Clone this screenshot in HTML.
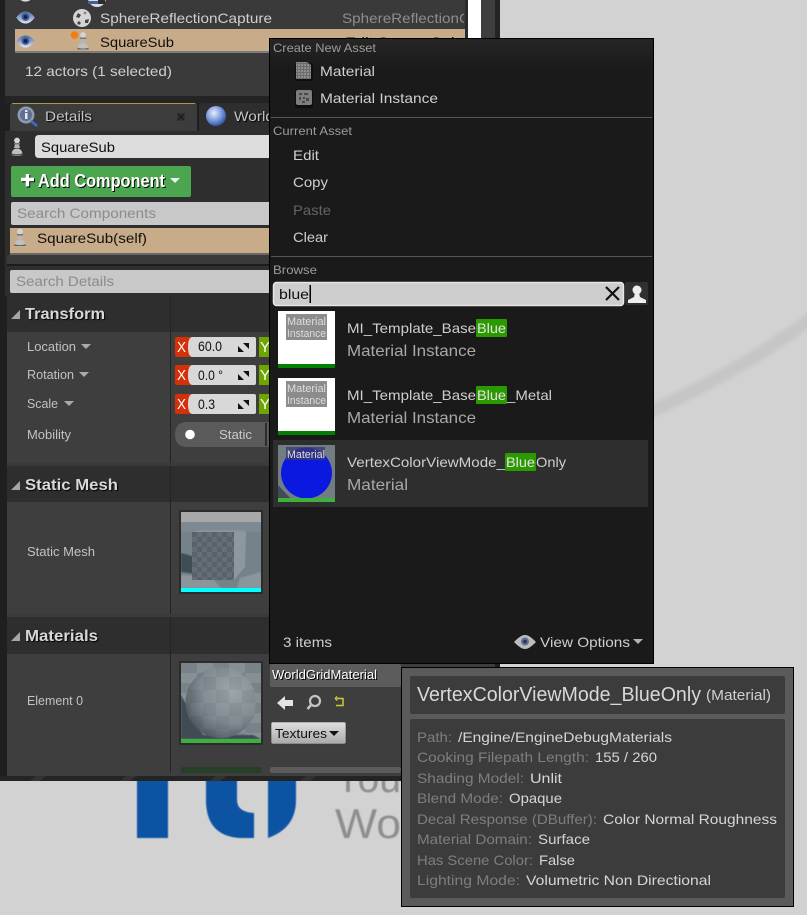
<!DOCTYPE html>
<html><head><meta charset="utf-8"><style>
html,body{margin:0;padding:0;background:#d2d2d2;width:807px;height:915px;overflow:hidden}
svg{display:block;position:absolute;left:0;top:0}
text{font-family:"Liberation Sans",sans-serif;font-size:14px;fill:#cfcfcf;white-space:pre}
.s{text-shadow:1px 1px 1px #000}
.k{fill:#101010}
.h{font-size:12px;fill:#9c9c9c}
.sub{font-size:16px;fill:#a8a8a8}
.p{font-size:13px;fill:#c2c2c2}
.b{font-weight:bold;font-size:16px;fill:#d8d8d8;text-shadow:1px 1px 1px #000}
.l{fill:#7e7e7e}
.v{fill:#d6d6d6}
</style></head><body>
<svg width="807" height="915" viewBox="0 0 807 915" xmlns="http://www.w3.org/2000/svg">
<defs>
<filter id="bl1" x="-10%" y="-10%" width="120%" height="120%"><feGaussianBlur stdDeviation=".6"/></filter>
<filter id="bl2" x="-10%" y="-30%" width="120%" height="160%"><feGaussianBlur stdDeviation="2"/></filter>
<linearGradient id="btn" x1="0" y1="0" x2="0" y2="1"><stop offset="0" stop-color="#e0e0e0"/><stop offset="1" stop-color="#a8a8a8"/></linearGradient>
<linearGradient id="top" x1="0" y1="0" x2="0" y2="1"><stop offset="0" stop-color="#262626"/><stop offset="1" stop-color="#1a1a1a"/></linearGradient>
<linearGradient id="eyeg" x1="0" y1="0" x2="0" y2="1"><stop offset="0" stop-color="#4f6ba6"/><stop offset=".5" stop-color="#8fa4cf"/><stop offset="1" stop-color="#e4e8f0"/></linearGradient>
<radialGradient id="sph" cx=".66" cy=".34" r=".82"><stop offset="0" stop-color="#9ca6ab"/><stop offset=".55" stop-color="#808b91"/><stop offset=".85" stop-color="#596268"/><stop offset="1" stop-color="#383f44"/></radialGradient>
<radialGradient id="glob" cx=".4" cy=".35" r=".7"><stop offset="0" stop-color="#e8eefa"/><stop offset=".6" stop-color="#6f90d8"/><stop offset="1" stop-color="#2c4a90"/></radialGradient>
<pattern id="chk2" width="10" height="10" patternUnits="userSpaceOnUse" x="192" y="532"><rect width="10" height="10" fill="#646e75"/><rect width="5" height="5" fill="#59626a"/><rect x="5" y="5" width="5" height="5" fill="#59626a"/></pattern>
<pattern id="chk3" width="32" height="20" patternUnits="userSpaceOnUse" x="181" y="663"><rect width="32" height="20" fill="#868f94"/><rect width="16" height="10" fill="#788288"/><rect x="16" y="10" width="16" height="10" fill="#788288"/></pattern>
<pattern id="chk4" width="26" height="26" patternUnits="userSpaceOnUse" x="190" y="664"><rect width="13" height="13" fill="#000"/><rect x="13" y="13" width="13" height="13" fill="#000"/></pattern>
<pattern id="grid" width="3" height="3" patternUnits="userSpaceOnUse"><rect width="3" height="3" fill="#8e8e8e"/><rect width="1" height="3" fill="#6c6c6c"/><rect width="3" height="1" fill="#6c6c6c"/></pattern>
<clipPath id="cTop"><rect x="0" y="0" width="464" height="28"/></clipPath>
<clipPath id="cWorld"><rect x="198" y="100" width="71" height="32"/></clipPath>
<clipPath id="cS"><rect x="181" y="663" width="80" height="76"/></clipPath>
<clipPath id="cB"><rect x="278" y="445" width="57" height="53"/></clipPath>
<clipPath id="cM"><rect x="181" y="512" width="80" height="76"/></clipPath>
<symbol id="eye" viewBox="0 0 20 14" overflow="visible"><path d="M0 7C4 1.500 7 .5 10 .5S16 1.500 20 7C16 12.500 13 13.500 10 13.500S4 12.500 0 7Z" fill="url(#eyeg)"/><circle cx="10" cy="6.500" r="4.200" fill="#3f5a94"/><circle cx="10" cy="6.500" r="2" fill="#14203f"/></symbol>
<symbol id="pawn" viewBox="0 0 12 18" overflow="visible"><circle cx="6" cy="3" r="2.900" fill="#d4d4d4"/><rect x="3" y="5.500" width="6" height="1.500" fill="#777"/><path d="M4 7h4l1 3.500H3Z" fill="#b6b6b6"/><path d="M.5 17c0-3.500 2-6 5.500-6s5.500 2.500 5.500 6c0 .8-1 1-5.500 1s-5.500-.2-5.500-1Z" fill="#c0c0c0"/><path d="M.5 15.500c2 1.500 9 1.500 11 0v2H.5Z" fill="#5e5e5e"/></symbol>
</defs>

<!-- page background decoration -->
<rect width="807" height="915" fill="#d2d2d2"/>
<path d="M640 416Q735 375 815 316" fill="none" stroke="#c6c6c6" stroke-width="13" filter="url(#bl2)"/>
<g filter="url(#bl1)">
<path d="M137 775h31v63h-31Z" fill="#0a52a4"/>
<path d="M206 775H237V800Q237 812 254 813V838H240Q206 836 206 800Z" fill="#0a52a4"/>
<path d="M268 775H296V800Q296 828 268 838Z" fill="#0a52a4"/>
<text x="335" y="792" textLength="66" lengthAdjust="spacingAndGlyphs" style="font-size:42px;fill:#8e8e8e">You</text>
<text x="335" y="838" textLength="66" lengthAdjust="spacingAndGlyphs" style="font-size:42px;fill:#8e8e8e">Wo</text>
</g>

<!-- editor window -->
<rect x="0" y="0" width="500" height="781" fill="#1f1f1f"/>
<rect x="5" y="0" width="460" height="96" fill="#3a3a3a"/>
<rect x="468" y="0" width="13" height="38" fill="#fff"/>
<rect x="465" y="0" width="3" height="38" fill="#2a2a2a"/>
<rect x="481" y="0" width="14" height="38" fill="#3e3e3e"/>
<rect x="5" y="96" width="490" height="7" fill="#242424"/>
<rect x="5" y="131" width="490" height="165" fill="#2e2e2e"/>

<!-- outliner -->
<use href="#eye" x="16" y="-11" width="19" height="13"/>
<circle cx="97" cy="-2" r="9" fill="#dcdcdc"/><path d="M88 1h10v3H88Z" fill="#3f5f9f"/><path d="M98 0h7v4h-7Z" fill="#2c2c2c"/>
<use href="#eye" x="16" y="11" width="19" height="13"/>
<circle cx="82" cy="18" r="9" fill="#d4d4d4"/><path d="M78 13l3 2-2 3-3-1ZM85 20l4-1-1 4-3 0Z" fill="#444"/><circle cx="79" cy="23" r="1.600" fill="#444"/><circle cx="85" cy="13" r="1.400" fill="#888"/>
<text x="100" y="23" textLength="172" lengthAdjust="spacingAndGlyphs">SphereReflectionCapture</text>
<g clip-path="url(#cTop)"><text x="342" y="23" style="fill:#8d8d8d" textLength="128" lengthAdjust="spacingAndGlyphs">SphereReflectionC</text></g>
<rect x="15" y="29" width="450" height="22" fill="#c8ab88"/>
<rect x="15" y="51" width="450" height="2" fill="#7d7d7d"/>
<use href="#eye" x="16" y="35" width="19" height="13"/>
<use href="#pawn" x="77" y="32" width="12" height="18"/>
<circle cx="74.500" cy="35" r="3.800" fill="#ee7f10"/>
<text class="k" x="100" y="47" textLength="74" lengthAdjust="spacingAndGlyphs">SquareSub</text>
<text class="k" x="345" y="47" textLength="115" lengthAdjust="spacingAndGlyphs">Edit SquareSub</text>
<text x="25" y="76" textLength="147" lengthAdjust="spacingAndGlyphs">12 actors (1 selected)</text>

<!-- tabs -->
<path d="M10 131V106q0-3 3-3H197V131Z" fill="#3c3c3c"/>
<path d="M12 103.500H195" stroke="#a69a52" stroke-width="1"/>
<path d="M199 131V106q0-3 3-3H270V131Z" fill="#2e2e2e"/>
<circle cx="26" cy="115" r="8.500" fill="#8f9bb0"/><circle cx="26" cy="115" r="6" fill="#5d6f95"/><rect x="25" y="113" width="2.500" height="6" fill="#e8e8e8"/><rect x="25" y="110" width="2.500" height="2" fill="#e8e8e8"/><path d="M31 121l6 5" stroke="#3a6fd0" stroke-width="2.500"/>
<text class="s" x="45" y="121" textLength="47" lengthAdjust="spacingAndGlyphs" style="fill:#c4c4c4">Details</text>
<path d="M177 113h8v8h-8Z" fill="#333"/><path d="M178 114l6 6M184 114l-6 6" stroke="#1c1c1c" stroke-width="1.500"/>
<circle cx="216" cy="116" r="10" fill="url(#glob)"/>
<g clip-path="url(#cWorld)"><text class="s" x="234" y="121" textLength="40" lengthAdjust="spacingAndGlyphs" style="fill:#c4c4c4">World</text></g>

<!-- details top -->
<use href="#pawn" x="11" y="137" width="12" height="19"/>
<path d="M35 139q0-4 4-4H270v23H39q-4 0-4-4Z" fill="#dcdcdc"/>
<text class="k" x="41" y="152" textLength="74" lengthAdjust="spacingAndGlyphs">SquareSub</text>
<rect x="11" y="166" width="180" height="31" rx="2" fill="#4ca64f"/>
<path d="M21 179.500h13M27.500 174v12.500" stroke="#000" stroke-width="3.500" transform="translate(1 1)"/>
<path d="M21 179.500h13M27.500 174v12.500" stroke="#fff" stroke-width="3.500"/>
<text x="38" y="187" textLength="127" lengthAdjust="spacingAndGlyphs" style="font-size:18px;font-weight:bold;fill:#fff;text-shadow:1px 1px 0 #000">Add Component</text>
<path d="M170 178h10l-5 5Z" fill="#eee"/>
<path d="M11 204q0-2 2-2H270v23H13q-2 0-2-2Z" fill="#c8c8c8"/>
<text x="17" y="218" textLength="139" lengthAdjust="spacingAndGlyphs" style="fill:#8b8b8b">Search Components</text>
<rect x="10" y="228" width="260" height="25" fill="#c8ab88"/>
<rect x="10" y="253" width="260" height="2" fill="#686868"/>
<rect x="7" y="255" width="263" height="9" fill="#3a3a3a"/>
<rect x="7" y="264" width="263" height="2" fill="#1c1c1c"/>
<use href="#pawn" x="14" y="228" width="12" height="19"/>
<text class="k" x="37" y="243" textLength="110" lengthAdjust="spacingAndGlyphs">SquareSub(self)</text>
<path d="M10 272q0-2 2-2H270v23H12q-2 0-2-2Z" fill="#c8c8c8"/>
<text x="16" y="286" textLength="98" lengthAdjust="spacingAndGlyphs" style="fill:#8b8b8b">Search Details</text>

<!-- property panels -->
<rect x="7" y="296" width="488" height="480" fill="#3e3e3e"/>
<rect x="7" y="296" width="263" height="36" fill="#2e2e2e"/>
<rect x="7" y="466" width="263" height="36" rx="2" fill="#2e2e2e"/>
<rect x="7" y="617" width="263" height="37" rx="2" fill="#2e2e2e"/>
<rect x="7" y="463" width="263" height="3" fill="#3a3a3a"/>
<rect x="7" y="614" width="263" height="3" fill="#3a3a3a"/>
<path d="M170.500 296V463M170.500 466V614M170.500 617V773" stroke="#242424"/>
<path d="M11 319h9v-9Z" fill="#a6a6a6"/>
<text class="b" x="25" y="319" textLength="80" lengthAdjust="spacingAndGlyphs">Transform</text>
<path d="M11 490h9v-9Z" fill="#a6a6a6"/>
<text class="b" x="25" y="490" textLength="93" lengthAdjust="spacingAndGlyphs">Static Mesh</text>
<path d="M11 641h9v-9Z" fill="#a6a6a6"/>
<text class="b" x="25" y="641" textLength="73" lengthAdjust="spacingAndGlyphs">Materials</text>

<text class="p" x="27" y="351" textLength="49" lengthAdjust="spacingAndGlyphs">Location</text>
<path d="M81 344h10l-5 5Z" fill="#aaa"/>
<text class="p" x="27" y="379" textLength="47" lengthAdjust="spacingAndGlyphs">Rotation</text>
<path d="M79 372h10l-5 5Z" fill="#aaa"/>
<text class="p" x="27" y="408" textLength="31" lengthAdjust="spacingAndGlyphs">Scale</text>
<path d="M64 401h10l-5 5Z" fill="#aaa"/>
<text class="p" x="27" y="439" textLength="44" lengthAdjust="spacingAndGlyphs">Mobility</text>
<text class="p" x="27" y="556" textLength="68" lengthAdjust="spacingAndGlyphs">Static Mesh</text>
<text class="p" x="27" y="705" textLength="56" lengthAdjust="spacingAndGlyphs">Element 0</text>

<!-- vector rows -->
<g id="r1">
<path d="M177 337h15v20h-15q-2 0-2-2v-16q0-2 2-2Z" fill="#d4310a"/>
<path d="M192 337h62q2 0 2 2v16q0 2-2 2h-62q-4-1-4-10t4-10Z" fill="#d8d8d8"/>
<rect x="259" y="337" width="11" height="20" fill="#6ea600"/>
<text x="177" y="352" textLength="9" lengthAdjust="spacingAndGlyphs" style="fill:#fff;font-size:15px">X</text>
<text x="260" y="352" style="fill:#fff;font-size:15px">Y</text>
<path d="M243 343h6v6ZM238 346l6 6h-6Z" fill="#111"/>
<path d="M246 343l3 0 0 3-3-3ZM238 349l3 3h-3Z" fill="#111"/>
</g>
<use href="#r1" y="28"/>
<use href="#r1" y="57"/>
<text class="k" x="198" y="351" textLength="24" lengthAdjust="spacingAndGlyphs">60.0</text>
<text class="k" x="198" y="380" textLength="25" lengthAdjust="spacingAndGlyphs">0.0 °</text>
<text class="k" x="198" y="409" textLength="17" lengthAdjust="spacingAndGlyphs">0.3</text>

<path d="M187 422H270V447H187q-12 0-12-12.500T187 422Z" fill="#5a5a5a"/>
<circle cx="190" cy="434.500" r="4.800" fill="#fff"/>
<text class="p" x="219" y="439" textLength="33" lengthAdjust="spacingAndGlyphs" style="fill:#c8c8c8">Static</text>
<rect x="265" y="423" width="2" height="23" fill="#2c2c2c"/>

<!-- static mesh thumb -->
<rect x="179" y="510" width="84" height="84" fill="#2c2c2c"/>
<rect x="181" y="512" width="80" height="80" fill="#75828a"/>
<g clip-path="url(#cM)">
<rect x="181" y="512" width="80" height="10" fill="#a8a8a8"/>
<rect x="181" y="522" width="80" height="10" fill="#7d8890"/>
<path d="M181 553l11 3 12 19-23-3Z" fill="#3f4d57" filter="url(#bl1)"/>
<path d="M181 575l30 2 10 11h-40ZM240 578l21-6v16h-24Z" fill="#8b969c" filter="url(#bl1)"/>
<path d="M234 532l12-1-1 36-11 13Z" fill="#8d989e"/>
<path d="M192 532l8-2h46l-12 2Z" fill="#88939a"/>
<path d="M192 532h42v48h-42Z" fill="url(#chk2)"/>
</g>
<rect x="181" y="588" width="80" height="4" fill="#00ffff"/>

<!-- material thumb -->
<rect x="179" y="661" width="84" height="84" fill="#2c2c2c"/>
<g clip-path="url(#cS)">
<rect x="181" y="663" width="80" height="76" fill="url(#chk3)"/>
<path d="M181 695l22 40h50l8 4H181Z" fill="#3f4c54" filter="url(#bl1)"/>
<circle cx="221" cy="702.500" r="35.500" fill="url(#sph)"/>
<circle cx="221" cy="702.500" r="35.500" fill="url(#chk4)" opacity=".05"/>
</g>
<rect x="181" y="739" width="80" height="4" fill="#3db03d"/>
<rect x="181" y="767" width="80" height="6" fill="#263f26"/>
<rect x="270" y="767" width="131" height="6" rx="2" fill="#5c5c5c"/>
<rect x="270" y="664" width="131" height="23" rx="2" fill="#5c5c5c"/>
<text x="272" y="679" textLength="105" lengthAdjust="spacingAndGlyphs" style="fill:#fff;font-size:13px;text-shadow:1px 1px 0 #000">WorldGridMaterial</text>
<path d="M277 703l8-7v4h8v6h-8v4Z" fill="#e4e4e4"/>
<circle cx="315" cy="701" r="5" fill="none" stroke="#c4c4c4" stroke-width="2.200"/><path d="M311 705l-3.500 4" stroke="#c4c4c4" stroke-width="2.500"/>
<path d="M337 698.500h6v7h-7M337 696.500l-1.500 2 1.500 2" fill="none" stroke="#cccc33" stroke-width="1.500"/>
<rect x="271" y="722" width="75" height="22" rx="2" fill="url(#btn)" stroke="#333" stroke-width=".6"/>
<text class="k" x="275" y="738" textLength="52" lengthAdjust="spacingAndGlyphs" style="font-size:13px">Textures</text>
<path d="M329 731h10l-5 5Z" fill="#111"/>

<!-- bottom window edge -->
<rect x="0" y="776" width="402" height="5" fill="#242424"/>
<path d="M30 781l6-5h10l-6 5ZM120 781l6-5h10l-6 5ZM210 781l6-5h10l-6 5ZM300 781l6-5h10l-6 5Z" fill="#333"/>
<rect x="495" y="0" width="5" height="38" fill="#242424"/>

<!-- asset popup -->
<rect x="269.500" y="38.500" width="384" height="625" fill="#1a1a1a" stroke="#000"/>
<rect x="270" y="39" width="383" height="30" fill="url(#top)"/>
<text class="h" x="273" y="52" textLength="103" lengthAdjust="spacingAndGlyphs">Create New Asset</text>
<rect x="295" y="63" width="18" height="18" fill="#0e0e0e"/>
<path d="M296 62h11l4 3v14h-15Z" fill="url(#grid)"/>
<text x="320" y="76" textLength="55" lengthAdjust="spacingAndGlyphs">Material</text>
<rect x="295" y="90" width="18" height="18" fill="#0e0e0e"/>
<rect x="296" y="90" width="16" height="15" rx="2" fill="#7e7e7e"/>
<path d="M299 93h3v2h-3ZM304 93h4v2h-4ZM299 97h2v3h-2ZM303 97h2v2h-2ZM306 98h3v3h-3ZM302 101h3v2h-3Z" fill="#4a4a4a"/>
<text x="320" y="103" textLength="118" lengthAdjust="spacingAndGlyphs">Material Instance</text>
<rect x="271" y="117" width="381" height="1" fill="#555"/>
<text class="h" x="273" y="135" textLength="79" lengthAdjust="spacingAndGlyphs">Current Asset</text>
<text x="293" y="160" textLength="26" lengthAdjust="spacingAndGlyphs">Edit</text>
<text x="293" y="187" textLength="35" lengthAdjust="spacingAndGlyphs">Copy</text>
<text x="293" y="215" textLength="38" lengthAdjust="spacingAndGlyphs" style="fill:#646464">Paste</text>
<text x="293" y="242" textLength="35" lengthAdjust="spacingAndGlyphs">Clear</text>
<rect x="271" y="256" width="381" height="1" fill="#555"/>
<text class="h" x="273" y="274" textLength="44" lengthAdjust="spacingAndGlyphs">Browse</text>

<rect x="273.500" y="282.500" width="350" height="23" rx="3" fill="#cdcdcd" stroke="#e6e6e6" stroke-width="1.500"/>
<text class="k" x="279" y="299" textLength="30" lengthAdjust="spacingAndGlyphs">blue</text>
<rect x="309.500" y="285" width="1.500" height="18" fill="#000"/>
<path d="M606 287l13 13M619 287l-13 13" stroke="#111" stroke-width="2.200"/>
<rect x="625" y="282" width="23" height="23" rx="2" fill="#303030"/>
<circle cx="637" cy="290" r="4.500" fill="#eee"/>
<path d="M635 293h4l1 4 6 3v3h-18v-3l6-3Z" fill="#eee"/>

<!-- result 1 -->
<rect x="278" y="311" width="57" height="57" fill="#fff"/>
<rect x="278" y="364" width="57" height="4" fill="#007f00"/>
<rect x="286" y="314" width="41" height="26" fill="#8c8c8c"/>
<text x="287" y="325" textLength="39" lengthAdjust="spacingAndGlyphs" style="font-size:11px;fill:#dedede">Material</text>
<text x="287" y="337" textLength="39" lengthAdjust="spacingAndGlyphs" style="font-size:11px;fill:#dedede">Instance</text>
<text x="347" y="333" textLength="129" lengthAdjust="spacingAndGlyphs">MI_Template_Base</text>
<rect x="476" y="319" width="31" height="18" rx="1" fill="#2b9900"/>
<text x="477" y="333" textLength="29" lengthAdjust="spacingAndGlyphs" style="fill:#e4e4e4">Blue</text>
<text class="sub" x="347" y="356" textLength="129" lengthAdjust="spacingAndGlyphs">Material Instance</text>

<!-- result 2 -->
<rect x="278" y="378" width="57" height="57" fill="#fff"/>
<rect x="278" y="431" width="57" height="4" fill="#007f00"/>
<rect x="286" y="381" width="41" height="26" fill="#8c8c8c"/>
<text x="287" y="392" textLength="39" lengthAdjust="spacingAndGlyphs" style="font-size:11px;fill:#dedede">Material</text>
<text x="287" y="404" textLength="39" lengthAdjust="spacingAndGlyphs" style="font-size:11px;fill:#dedede">Instance</text>
<text x="347" y="400" textLength="129" lengthAdjust="spacingAndGlyphs">MI_Template_Base</text>
<rect x="476" y="386" width="31" height="18" rx="1" fill="#2b9900"/>
<text x="477" y="400" textLength="29" lengthAdjust="spacingAndGlyphs" style="fill:#e4e4e4">Blue</text>
<text x="507" y="400" textLength="45" lengthAdjust="spacingAndGlyphs">_Metal</text>
<text class="sub" x="347" y="423" textLength="129" lengthAdjust="spacingAndGlyphs">Material Instance</text>

<!-- result 3 -->
<rect x="273" y="440" width="375" height="67" fill="#2e2e2e"/>
<rect x="278" y="445" width="57" height="57" fill="#6d7a82"/>
<g clip-path="url(#cB)">
<rect x="278" y="445" width="57" height="57" fill="#717c83"/>
<path d="M278 485l12 13h-12Z" fill="#3f4c54"/>
<circle cx="306.500" cy="473" r="25.500" fill="#0a18e0"/>
</g>
<rect x="286" y="447" width="39" height="13" fill="#3a3a6a" opacity=".75"/>
<text x="287" y="458" textLength="38" lengthAdjust="spacingAndGlyphs" style="font-size:11px;fill:#dedede">Material</text>
<rect x="278" y="498" width="57" height="4" fill="#3db03d"/>
<text x="347" y="467" textLength="158" lengthAdjust="spacingAndGlyphs">VertexColorViewMode_</text>
<rect x="505" y="453" width="31" height="18" rx="1" fill="#2b9900"/>
<text x="506" y="467" textLength="29" lengthAdjust="spacingAndGlyphs" style="fill:#e4e4e4">Blue</text>
<text x="536" y="467" textLength="30" lengthAdjust="spacingAndGlyphs">Only</text>
<text class="sub" x="347" y="490" textLength="61" lengthAdjust="spacingAndGlyphs">Material</text>

<!-- popup footer -->
<text x="283" y="647" textLength="49" lengthAdjust="spacingAndGlyphs">3 items</text>
<path d="M514 642C519 637 522 635 525 635S531 637 536 642C531 647 528 649 525 649S519 647 514 642Z" fill="#bcbcbc"/><circle cx="525" cy="641.500" r="4" fill="#5c6f96"/><circle cx="525" cy="641.500" r="1.800" fill="#2a3656"/>
<text x="540" y="647" textLength="90" lengthAdjust="spacingAndGlyphs">View Options</text>
<path d="M633 639h10l-5 5Z" fill="#b4b4b4"/>

<!-- tooltip -->
<rect x="401.500" y="667.500" width="392" height="239" fill="#5a5a5a" stroke="#000"/>
<rect x="410" y="676" width="375" height="38" rx="2" fill="#3c3c3c"/>
<rect x="410" y="719" width="375" height="179" rx="2" fill="#3c3c3c"/>
<text x="417" y="701" textLength="284" lengthAdjust="spacingAndGlyphs" style="font-size:20px;fill:#d8d8d8">VertexColorViewMode_BlueOnly</text>
<text x="706" y="700" textLength="65" lengthAdjust="spacingAndGlyphs" style="font-size:15px;fill:#d0d0d0">(Material)</text>

<text class="l" x="417" y="742" textLength="35" lengthAdjust="spacingAndGlyphs">Path:</text>
<text class="v" x="458" y="742" textLength="214" lengthAdjust="spacingAndGlyphs">/Engine/EngineDebugMaterials</text>
<text class="l" x="417" y="762" textLength="172" lengthAdjust="spacingAndGlyphs">Cooking Filepath Length:</text>
<text class="v" x="595" y="762" textLength="62" lengthAdjust="spacingAndGlyphs">155 / 260</text>
<text class="l" x="417" y="783" textLength="107" lengthAdjust="spacingAndGlyphs">Shading Model:</text>
<text class="v" x="530" y="783" textLength="32" lengthAdjust="spacingAndGlyphs">Unlit</text>
<text class="l" x="417" y="803" textLength="86" lengthAdjust="spacingAndGlyphs">Blend Mode:</text>
<text class="v" x="509" y="803" textLength="53" lengthAdjust="spacingAndGlyphs">Opaque</text>
<text class="l" x="417" y="824" textLength="180" lengthAdjust="spacingAndGlyphs">Decal Response (DBuffer):</text>
<text class="v" x="603" y="824" textLength="174" lengthAdjust="spacingAndGlyphs">Color Normal Roughness</text>
<text class="l" x="417" y="844" textLength="115" lengthAdjust="spacingAndGlyphs">Material Domain:</text>
<text class="v" x="538" y="844" textLength="52" lengthAdjust="spacingAndGlyphs">Surface</text>
<text class="l" x="417" y="865" textLength="116" lengthAdjust="spacingAndGlyphs">Has Scene Color:</text>
<text class="v" x="539" y="865" textLength="36" lengthAdjust="spacingAndGlyphs">False</text>
<text class="l" x="417" y="885" textLength="103" lengthAdjust="spacingAndGlyphs">Lighting Mode:</text>
<text class="v" x="526" y="885" textLength="185" lengthAdjust="spacingAndGlyphs">Volumetric Non Directional</text>
</svg>
</body></html>
